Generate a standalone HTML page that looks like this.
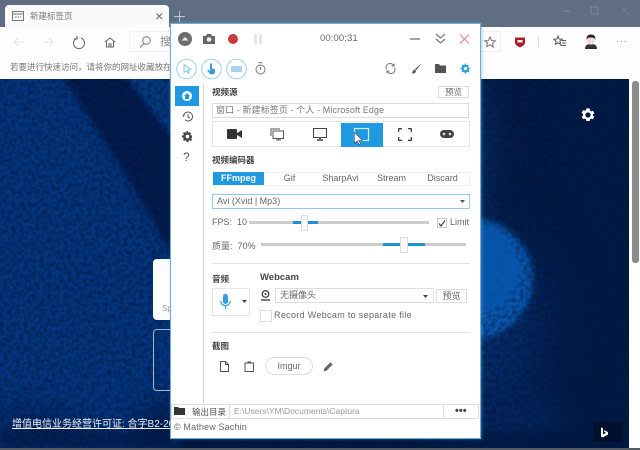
<!DOCTYPE html>
<html><head><meta charset="utf-8"><style>
*{box-sizing:border-box}
html,body{margin:0;padding:0}
body{width:640px;height:450px;overflow:hidden;position:relative;background:#fff;font-family:"Liberation Sans","Noto Sans CJK SC",sans-serif;font-size:9px;color:#555}
.a{position:absolute;white-space:nowrap}
.box{position:absolute;border:1px solid #ddd;background:#fff}
svg{position:absolute;overflow:visible}
.h{font-size:8.5px;color:#444;font-weight:bold}
.t{text-align:center;line-height:13px;font-size:9px;color:#666;top:172px}
</style></head><body>
<!-- browser chrome -->
<div class="a" style="left:0;top:0;width:640px;height:27px;background:#5f6e83"></div>
<div class="a" style="left:5px;top:5px;width:164px;height:23px;background:#fafafa;border-radius:4px 4px 0 0"></div>
<div class="a" style="left:30px;top:10px;font-size:8.500px;color:#777">新建标签页</div>
<svg style="left:12px;top:11px" width="12" height="10"><rect x=".5" y=".5" width="11" height="9" fill="none" stroke="#777"/><path d="M1 3h10" stroke="#777"/><path d="M3 6h6" stroke="#777" stroke-dasharray="1.500 1"/></svg>
<svg style="left:156px;top:13px" width="7" height="7"><path d="M.5.5l5.500 5.500M6 .5L.5 6" stroke="#666" stroke-width="1"/></svg>
<svg style="left:174px;top:11px" width="11" height="11"><path d="M5.500 0v11M0 5.500h11" stroke="#bfc7d1" stroke-width="1"/></svg>
<svg style="left:561px;top:5px" width="70" height="12"><path d="M1 6h8" stroke="#7f8c9e"/><rect x="30" y="2" width="7" height="7" fill="none" stroke="#7f8c9e"/><path d="M60 2l7 7M67 2l-7 7" stroke="#6f7e93"/></svg>
<div class="a" style="left:0;top:27px;width:640px;height:52px;background:#fdfdfd"></div>
<svg style="left:13px;top:35px" width="110" height="14" fill="none"><path d="M1 7h10M5 3L1 7l4 4" stroke="#e2e2e2"/><path d="M30 7h10M36 3l4 4-4 4" stroke="#e2e2e2"/><path d="M64 3a5.500 5.500 0 1 0 4 0" stroke="#666"/><path d="M64 1v3h-3" stroke="#666"/><path d="M92 7l5-4 5 4M93.500 6.500V12h7V6.500M96 12V9h2v3" stroke="#666"/></svg>
<div class="a" style="left:129px;top:31px;width:50px;height:21px;border:1px solid #f0f0f0;border-right:0"></div>
<svg style="left:139px;top:36px" width="12" height="12" fill="none"><circle cx="7.500" cy="4.500" r="3.800" stroke="#777"/><path d="M5 7.500L1 11.500" stroke="#777"/></svg>
<div class="a" style="left:160px;top:33px;font-size:11px;color:#888">搜</div>
<div class="a" style="left:10px;top:61px;font-size:8.500px;color:#777">若要进行快速访问，请将你的网址收藏放在此</div>
<div class="a" style="left:480px;top:31px;width:21px;height:21px;border:1px solid #f0f0f0"></div>
<svg style="left:484px;top:36px" width="12" height="12" fill="none"><path d="M6 1l1.500 3.500 3.800.4-2.800 2.500.8 3.700L6 8.700l-3.300 1.900.8-3.700L.7 4.900l3.800-.4z" stroke="#777"/></svg>
<svg style="left:514px;top:36px" width="12" height="12"><path d="M1 1.500h10v5c0 2.500-2.500 3.800-5 5-2.500-1.200-5-2.500-5-5z" fill="#a51f24"/><rect x="3.500" y="4" width="5" height="2.500" fill="#eee"/></svg>
<div class="a" style="left:538px;top:36px;width:1px;height:12px;background:#e2e2e2"></div>
<svg style="left:553px;top:35px" width="14" height="13" fill="none"><path d="M5 1l1.200 3 3 .3-2.300 2 .7 3L5 7.800 2.400 9.300l.7-3-2.300-2 3-.3z" stroke="#555"/><path d="M9 5.500h4M9 8h4M7.500 10.500h5.500" stroke="#555"/></svg>
<svg style="left:584px;top:34px" width="14" height="16"><path d="M1 15c0-4 2.500-5 6-5s6 1 6 5z" fill="#333"/><ellipse cx="7" cy="6" rx="4" ry="4.800" fill="#f3dccf"/><path d="M2.700 6C2 1.500 5 .5 7 .5s5 1 4.300 5.500C10.500 3.500 9 3.500 7 3.500S3.500 3.500 2.700 6z" fill="#222"/></svg>
<div class="a" style="left:616px;top:35px;font-size:10px;color:#888;letter-spacing:.5px;line-height:14px">···</div>
<!-- wallpaper -->
<div class="a" style="left:0;top:79px;width:629px;height:369px;overflow:hidden;background:#03306f">
<svg style="left:0;top:0" width="629" height="369" viewBox="0 0 629 369">
<defs>
<filter id="b1" color-interpolation-filters="sRGB" x="-30%" y="-30%" width="160%" height="160%"><feGaussianBlur stdDeviation="3"/></filter>
<filter id="b2" color-interpolation-filters="sRGB" x="-50%" y="-50%" width="200%" height="200%"><feGaussianBlur stdDeviation="14"/></filter>
<filter id="b3" color-interpolation-filters="sRGB" x="-50%" y="-50%" width="200%" height="200%"><feGaussianBlur stdDeviation="30"/></filter>
<filter id="d" color-interpolation-filters="sRGB"><feTurbulence type="fractalNoise" baseFrequency=".25" numOctaves="3" seed="7"/><feColorMatrix values="0 0 0 0 .01 0 0 0 0 .07 0 0 0 0 .2 0 0 0 2 -.7"/></filter>
<filter id="l" color-interpolation-filters="sRGB"><feTurbulence type="fractalNoise" baseFrequency=".7 .5" numOctaves="2" seed="11"/><feColorMatrix values="0 0 0 0 .2 0 0 0 0 .4 0 0 0 0 .7 0 0 0 3 -1.700"/></filter>
</defs>
<rect x="0" y="0" width="200" height="369" fill="#03337a"/>
<rect x="170" y="0" width="459" height="369" fill="#021a45"/>
<path d="M0 0H60L180 220V369H0z" fill="#03357f" filter="url(#b1)"/>
<path d="M0 330C50 320 100 350 130 369H0z" fill="#022560" filter="url(#b2)"/>
<path d="M62 -5H125L180 70V190L135 110z" fill="#021a4c" filter="url(#b1)"/>
<path d="M125 -5H180V65z" fill="#053a82" filter="url(#b1)"/>
<path d="M120 369C140 340 155 325 180 318V369z" fill="#011a46" filter="url(#b2)"/>
<ellipse cx="470" cy="250" rx="75" ry="100" fill="#032c6a" filter="url(#b3)"/>
<ellipse cx="470" cy="70" rx="25" ry="80" fill="#032a60" filter="url(#b2)"/>
<ellipse cx="500" cy="340" rx="70" ry="25" fill="#02255e" filter="url(#b2)"/>
<ellipse cx="468" cy="200" rx="65" ry="62" fill="#0858b0" filter="url(#b1)"/>
<rect width="629" height="369" filter="url(#d)" opacity=".6"/>
<rect width="629" height="369" filter="url(#l)" opacity=".18"/>
<ellipse cx="466" cy="190" rx="54" ry="48" fill="#0855ae" opacity=".85" filter="url(#b1)"/>
<rect y="352" width="629" height="17" fill="#01163f" opacity=".5" filter="url(#b1)"/>
<rect x="560" width="69" height="369" fill="#011a44" opacity=".55" filter="url(#b2)"/>
</svg>
</div>
<!-- scrollbar -->
<div class="a" style="left:632px;top:81px;width:7px;height:182px;background:#8b8b8b;border-radius:3px"></div>
<div class="a" style="left:0;top:448px;width:640px;height:2px;background:#555c66"></div>
<svg style="left:580px;top:107px" width="16" height="16" viewBox="0 0 24 24"><path fill="#fff" fill-rule="evenodd" d="M19.400 13a7.500 7.500 0 0 0 0-2l2.200-1.700-2.200-3.700-2.600 1a7.600 7.600 0 0 0-1.700-1L14.500 2h-5l-.4 2.600a7.600 7.600 0 0 0-1.700 1l-2.600-1-2.400 3.700L4.600 11a7.500 7.500 0 0 0 0 2l-2.200 1.700 2.400 3.700 2.600-1a7.600 7.600 0 0 0 1.700 1l.4 2.600h5l.4-2.600a7.600 7.600 0 0 0 1.700-1l2.600 1 2.200-3.700zM12 8a4 4 0 1 1 0 8 4 4 0 0 1 0-8z"/></svg>
<div class="a" style="left:593px;top:422px;width:30px;height:20px;background:#02102d;border-radius:3px"></div>
<svg style="left:600px;top:427px" width="9" height="11"><path d="M1 .5l2 .8v6.200l3-1.700-1.500-.8-.8-2L8 5v2.500L3 10.500 1 9.500z" fill="#fff"/></svg>
<div class="a" style="left:153px;top:259px;width:20px;height:61px;background:#fdfdfd;border-radius:4px 0 0 4px"></div>
<div class="a" style="left:162px;top:304px;font-size:8px;color:#999">Sp</div>
<div class="a" style="left:153px;top:329px;width:20px;height:62px;border:1px solid #a8b4c4;border-right:0;border-radius:4px 0 0 4px"></div>
<div class="a" style="left:12px;top:415px;font-size:10px;color:#f2f2f2;text-decoration:underline;width:158px;overflow:hidden">增值电信业务经营许可证: 合字B2-2009</div>
<!-- window -->
<div class="a" style="left:170px;top:23px;width:311px;height:416px;background:#fff;border:1px solid #62b3dd;box-shadow:1px 0 3px rgba(120,160,190,.5)"></div>
<div class="a" style="left:203px;top:84px;width:1px;height:320px;background:#d5d5d5"></div>
<!-- title row -->
<svg style="left:178px;top:32px" width="14" height="14"><circle cx="7" cy="7" r="7" fill="#6d6d6d"/><path d="M3.500 8.500L7 5l3.500 3.500z" fill="#eee"/></svg>
<svg style="left:203px;top:34px" width="12" height="10"><path d="M0 2h3l1-2h4l1 2h3v8H0z" fill="#666"/><circle cx="6" cy="5.500" r="2.300" fill="#eee"/></svg>
<div class="a" style="left:228px;top:34px;width:10px;height:10px;border-radius:50%;background:#cb3a3e"></div>
<div class="a" style="left:254px;top:34px;width:3px;height:10px;background:#e6e6e6"></div>
<div class="a" style="left:259px;top:34px;width:3px;height:10px;background:#e6e6e6"></div>
<div class="a" style="left:320px;top:33px;font-size:9.500px;color:#666;letter-spacing:.1px">00:00:31</div>
<svg style="left:410px;top:33px" width="60" height="12" fill="none"><path d="M0 6h10" stroke="#666" stroke-width="1.200"/><path d="M26 1l4.500 4L35 1M26 6l4.500 4L35 6" stroke="#777" stroke-width="1.200"/><path d="M50 1.500l9 9M59 1.500l-9 9" stroke="#e79b9b" stroke-width="1.300"/></svg>
<!-- toggle row -->
<svg style="left:176px;top:58px" width="74" height="22"><g fill="#fff" stroke="#9ccdee"><circle cx="10.500" cy="11" r="9.800"/><circle cx="35.500" cy="11" r="9.800"/><circle cx="60.500" cy="11" r="9.800"/></g><path d="M8 6.500l7 5-3 .5 1.200 2.800-1.200.5-1.200-2.700-2.800 1.700z" fill="#fff" stroke="#7fbde8" stroke-width=".9"/><path d="M34 5.500h2v5l3 .8v3l-1 2h-4l-2.800-4 1-.6 1.800 1.400z" fill="#3d97da"/><rect x="55" y="8" width="11" height="6" rx="1" fill="#a5d3f2"/></svg>
<svg style="left:255px;top:62px" width="11" height="13" fill="none"><circle cx="5.500" cy="7.500" r="4.500" stroke="#777"/><path d="M5.500 5v2.800M3.500 .8h4" stroke="#777"/></svg>
<svg style="left:385px;top:63px" width="11" height="11" fill="none"><path d="M1.500 6.500A4 4 0 0 1 8.500 2.500M9.500 4.500A4 4 0 0 1 2.500 8.500" stroke="#777"/><path d="M9 .5v2.500H6.500M2 10.500V8h2.500" stroke="#777"/></svg>
<svg style="left:411px;top:63px" width="11" height="11"><path d="M10.500.5L4 6l1.200 1.200z" fill="#555"/><path d="M3.500 6.500C1.500 7 2 9.500.5 10.500c2.500.3 4.500-.5 4.500-2.700z" fill="#555"/></svg>
<svg style="left:435px;top:64px" width="11" height="9"><path d="M0 0h4l1 1.500h6V9H0z" fill="#555"/></svg>
<svg style="left:460px;top:63px" width="11" height="11" viewBox="0 0 24 24"><path fill="#2e9fe0" fill-rule="evenodd" d="M21 13.500v-3l-2.500-.6-.9-2.200 1.300-2.200-2.100-2.100-2.200 1.300-2.200-.9L13.500 1h-3l-.6 2.800-2.200.9-2.200-1.300-2.100 2.100 1.300 2.200-.9 2.200L1 10.500v3l2.800.6.9 2.200-1.300 2.200 2.100 2.100 2.200-1.300 2.200.9.6 2.800h3l.6-2.800 2.200-.9 2.200 1.300 2.100-2.100-1.300-2.200.9-2.200zM12 8.500a3.500 3.500 0 1 1 0 7 3.500 3.500 0 0 1 0-7z"/></svg>
<!-- side nav -->
<div class="a" style="left:175px;top:86px;width:24px;height:20px;background:#1f9ae0"></div>
<svg style="left:182px;top:91px" width="10" height="10"><circle cx="5" cy="5" r="5" fill="#fff"/><path d="M5 2L2 5h1v3h4V5h1z" fill="#1f9ae0"/></svg>
<svg style="left:182px;top:111px" width="11" height="11" fill="none"><path d="M1.500 5.500a4.500 4.500 0 1 1 1.300 3.200" stroke="#555"/><path d="M0 4.500l1.500 1.500L3 4.500z" fill="#555"/><path d="M6 3v3l2 1" stroke="#555"/></svg>
<svg style="left:182px;top:131px" width="11" height="11" viewBox="0 0 24 24"><path fill="#444" fill-rule="evenodd" d="M22 14v-4l-3-.6-.8-2 1.700-2.500-2.800-2.800-2.500 1.700-2-.8L14 0h-4l-.6 3-2 .8L4.900 2.100 2.100 4.900l1.700 2.500-.8 2L0 10v4l3 .6.800 2-1.700 2.500 2.800 2.800 2.500-1.700 2 .8.600 3h4l.6-3 2-.8 2.500 1.700 2.800-2.800-1.700-2.500.8-2zM12 8a4 4 0 1 1 0 8 4 4 0 0 1 0-8z"/></svg>
<div class="a" style="left:183px;top:150px;font-size:12px;color:#555">?</div>
<!-- 视频源 -->
<div class="a h" style="left:212px;top:86px">视频源</div>
<div class="box" style="left:438px;top:86px;width:31px;height:12px;text-align:center;font-size:8.500px;line-height:10px;color:#666">预览</div>
<div class="box" style="left:212px;top:103px;width:257px;height:15px;padding-left:3px;font-size:9px;line-height:13px;color:#777;letter-spacing:.1px">窗口 - 新建标签页 - 个人 - Microsoft Edge</div>
<div class="box" style="left:212px;top:121px;width:258px;height:26px;border-color:#e6e6e6"></div>
<div class="a" style="left:341px;top:123px;width:42px;height:24px;background:#1f9ae0"></div>
<svg style="left:227px;top:129px" width="15" height="10"><rect y="0" width="10" height="10" rx="1" fill="#333"/><path d="M10 4l5-3v8l-5-3z" fill="#333"/></svg>
<svg style="left:270px;top:128px" width="14" height="13" fill="none"><path d="M1 8V1h9" stroke="#555"/><rect x="3" y="3" width="10.500" height="7.500" fill="#fff" stroke="#555"/><path d="M6 12h5M8.500 10.500V12" stroke="#555"/></svg>
<svg style="left:313px;top:128px" width="14" height="13" fill="none"><rect x=".5" y=".5" width="13" height="9" stroke="#444"/><path d="M4 12h6M7 10v2" stroke="#444" stroke-width="1.400"/></svg>
<svg style="left:354px;top:128px" width="16" height="17"><rect x=".5" y=".5" width="14" height="12" fill="#1f9ae0" stroke="#d5ecfa" stroke-width="1.200"/><path d="M.5 4.500v11l2.800-2.600 1.800 3.700 1.500-.7-1.800-3.600h3.500z" fill="#fff" stroke="#444" stroke-width=".6"/></svg>
<svg style="left:398px;top:128px" width="14" height="13" fill="none" stroke="#444" stroke-width="1.300"><path d="M.7 4V.7H4M10 .7h3.300V4M.7 9v3.300H4M10 12.300h3.300V9"/></svg>
<svg style="left:440px;top:130px" width="14" height="9"><rect width="14" height="8" rx="4" fill="#444"/><circle cx="4" cy="4" r="1.300" fill="#ddd"/><circle cx="10" cy="4" r="1.300" fill="#ddd"/></svg>
<!-- encoder -->
<div class="a h" style="left:212px;top:154px">视频编码器</div>
<div class="box" style="left:212px;top:172px;width:258px;height:14px;border-color:#eee"></div>
<div class="a t" style="left:213px;width:51px;height:13px;background:#1f9ae0;color:#fff;font-weight:bold">FFmpeg</div>
<div class="a t" style="left:264px;width:51px">Gif</div>
<div class="a t" style="left:315px;width:51px">SharpAvi</div>
<div class="a t" style="left:366px;width:51px">Stream</div>
<div class="a t" style="left:417px;width:51px">Discard</div>
<div class="box" style="left:212px;top:194px;width:258px;height:15px;border-color:#8ccbef;padding-left:4px;line-height:13px;color:#666">Avi (Xvid | Mp3)</div>
<svg style="left:460px;top:200px" width="5" height="3"><path d="M0 0h5L2.500 3z" fill="#555"/></svg>
<!-- sliders -->
<div class="a" style="left:212px;top:217px;color:#666">FPS:&nbsp; 10</div>
<div class="a" style="left:249px;top:221px;width:180px;height:3px;background:#ccc"></div>
<div class="a" style="left:293px;top:221px;width:25px;height:3px;background:#1f8fd8"></div>
<div class="box" style="left:301px;top:215px;width:7px;height:16px;border-color:#ddd;background:#f8f8f8"></div>
<div class="box" style="left:437px;top:218px;width:10px;height:10px;border-color:#ccc"></div>
<svg style="left:438px;top:220px" width="8" height="7" fill="none"><path d="M1 3.500l2 2.500 4-5.500" stroke="#444" stroke-width="1.200"/></svg>
<div class="a" style="left:450px;top:217px;color:#666">Limit</div>
<div class="a" style="left:212px;top:239px;color:#666">质量:&nbsp; 70%</div>
<div class="a" style="left:261px;top:243px;width:205px;height:3px;background:#ccc"></div>
<div class="a" style="left:383px;top:243px;width:42px;height:3px;background:#1f8fd8"></div>
<div class="box" style="left:400px;top:237px;width:8px;height:16px;border-color:#ddd;background:#f8f8f8"></div>
<div class="a" style="left:212px;top:263px;width:258px;height:1px;background:#e3e3e3"></div>
<!-- audio / webcam -->
<div class="a h" style="left:212px;top:273px">音频</div>
<div class="box" style="left:212px;top:288px;width:38px;height:28px;border-color:#e6e6e6"></div>
<svg style="left:220px;top:294px" width="11" height="16" fill="none"><rect x="3" y="0" width="5" height="10" rx="2.500" fill="#2e9fe0"/><path d="M.8 7a4.700 4.700 0 0 0 9.400 0M5.500 12v3" stroke="#2e9fe0" stroke-width="1.200"/></svg>
<svg style="left:242px;top:300px" width="5" height="3"><path d="M0 0h5L2.500 3z" fill="#444"/></svg>
<div class="a h" style="left:260px;top:272px;font-size:9.500px">Webcam</div>
<svg style="left:261px;top:290px" width="9" height="11" fill="none"><circle cx="4.500" cy="4" r="3.300" stroke="#333" stroke-width="1.200"/><circle cx="4.500" cy="4" r="1" fill="#333"/><path d="M0 10h9" stroke="#333" stroke-width="1.300"/></svg>
<div class="box" style="left:275px;top:288px;width:159px;height:15px;padding-left:4px;line-height:13px;color:#666">无摄像头</div>
<svg style="left:423px;top:295px" width="5" height="3"><path d="M0 0h5L2.500 3z" fill="#444"/></svg>
<div class="box" style="left:436px;top:289px;width:31px;height:14px;text-align:center;line-height:12px;color:#666">预览</div>
<div class="box" style="left:260px;top:310px;width:12px;height:12px;border-color:#ddd"></div>
<div class="a" style="left:274px;top:310px;color:#666;letter-spacing:.32px">Record Webcam to separate file</div>
<div class="a" style="left:212px;top:332px;width:258px;height:1px;background:#e3e3e3"></div>
<!-- screenshot -->
<div class="a h" style="left:212px;top:340px">截图</div>
<svg style="left:220px;top:361px" width="9" height="11" fill="none"><path d="M.5.5h5l3 3v7h-8zM5.500.5v3h3" stroke="#555"/></svg>
<svg style="left:244px;top:361px" width="11" height="11" fill="none"><rect x="1" y="2" width="8.500" height="8.500" stroke="#555"/><path d="M3.500 1.200h3.500" stroke="#555" stroke-width="1.500"/></svg>
<div class="a" style="left:265px;top:357px;width:48px;height:18px;border:1px solid #ddd;border-radius:9px;text-align:center;line-height:16px;font-size:9px;color:#666">Imgur</div>
<svg style="left:323px;top:361px" width="11" height="11"><path d="M.5 10.500l.8-3L7.500 1.300 9.700 3.500 3.500 9.700z" fill="#666"/></svg>
<!-- footer -->
<div class="box" style="left:171px;top:404px;width:308px;height:15px;border-color:#ddd"></div>
<svg style="left:174px;top:407px" width="11" height="8"><path d="M0 0h4l1 1h6v7H0z" fill="#333"/></svg>
<div class="a" style="left:192px;top:406px;font-size:8.500px;color:#555">输出目录</div>
<div class="a" style="left:229px;top:404px;width:1px;height:15px;background:#ddd"></div>
<div class="a" style="left:234px;top:406px;font-size:8.500px;color:#999">E:\Users\YM\Documents\Captura</div>
<div class="a" style="left:443px;top:404px;width:1px;height:15px;background:#ddd"></div>
<div class="a" style="left:455px;top:406px;font-size:11px;font-weight:bold;color:#444;line-height:11px">•••</div>
<div class="a" style="left:174px;top:422px;font-size:9px;color:#666;letter-spacing:.15px">© Mathew Sachin</div>
</body></html>
